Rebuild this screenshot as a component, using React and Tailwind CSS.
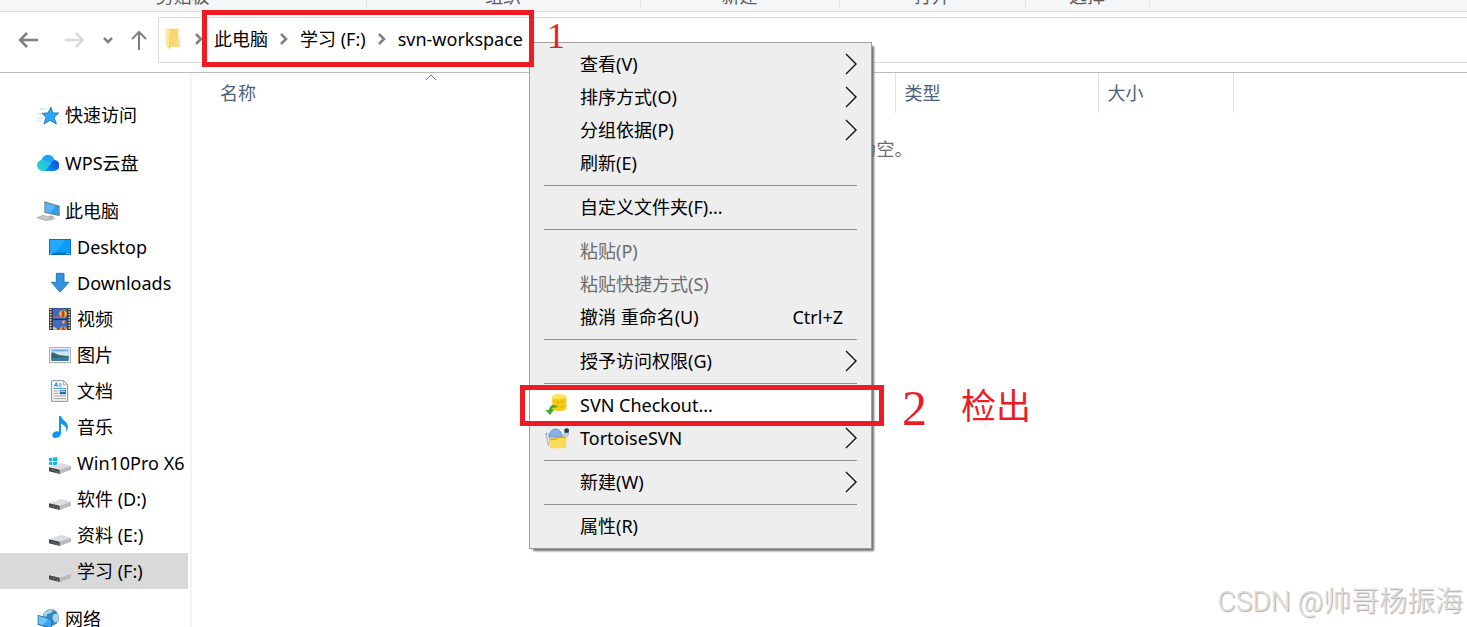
import React, { useState } from "react";

const StarIcon = () => (
  <svg viewBox="0 0 66 66" className="size-[22px] shrink-0" aria-hidden="true">
    <path d="M8 15h20M2 29h14M5 42h14M0 51h12" stroke="#8cc8f0" strokeWidth="2" />
    <path
      d="M42 10l5 17 18 0-14 13 7 20-19-11-18 11 6-20-12-12 18-1z"
      fill="#2ea8f5"
      stroke="#1c7fc4"
      strokeWidth="3"
      strokeLinejoin="round"
    />
  </svg>
);

const CloudIcon = () => (
  <svg viewBox="0 0 66 66" className="size-[22px] shrink-0" aria-hidden="true">
    <defs>
      <linearGradient id="cloudLeft" x1="0" y1="1" x2="1" y2="0">
        <stop offset="0" stopColor="#22dcc0" />
        <stop offset="1" stopColor="#25b4f5" />
      </linearGradient>
      <linearGradient id="cloudRight" x1="0" y1="1" x2="1" y2="0">
        <stop offset="0" stopColor="#0a8df5" />
        <stop offset="1" stopColor="#0a4fd6" />
      </linearGradient>
    </defs>
    <circle cx="33" cy="27" r="19" fill="#1ea2fa" />
    <path d="M17 23a17 17 0 1 0 0 34h18l10-24-12-6-6-1z" fill="url(#cloudLeft)" />
    <path d="M25 57l16-22a15 15 0 0 1 11-11 16 16 0 0 1-2 33z" fill="url(#cloudRight)" />
  </svg>
);

const ComputerIcon = () => (
  <svg viewBox="0 0 66 66" className="size-[22px] shrink-0 overflow-visible" aria-hidden="true">
    <path d="M38 46l14 4-2 8-18-5z" fill="#a8adb3" />
    <path d="M30 56l18-5 10 4-18 8z" fill="#c6cacf" />
    <path d="M22 4l46 13v32L22 38z" fill="#6f7f8e" />
    <path d="M25 8l40 12v25L25 35z" fill="#2f9eea" />
    <path d="M25 8l30 9-14 22-16-4z" fill="#55b5f7" />
    <path d="M0 53l18-7 28 8-19 8z" fill="#d6d9dc" stroke="#9ba0a6" strokeWidth="2" />
    <path d="M8 53l26 7M15 50l25 6" stroke="#9ba0a6" strokeWidth="2" strokeDasharray="4 2" />
  </svg>
);

const DesktopIcon = () => (
  <svg viewBox="0 0 66 66" className="size-[22px] shrink-0" aria-hidden="true">
    <path d="M0 9h66v48H0z" fill="#0b71b8" />
    <path d="M3 12h60v38H3z" fill="#0c9bfa" />
    <path d="M3 12h46L19 50H3z" fill="#27a8ff" />
    <path d="M4 53h4M52 53h3M58 53h4" stroke="#fff" strokeWidth="3" />
  </svg>
);

const DownloadIcon = () => (
  <svg viewBox="0 0 66 66" className="size-[22px] shrink-0" aria-hidden="true">
    <path d="M22 4h23v27h15L33 60 7 31h15z" fill="#3492e0" stroke="#2878bd" strokeWidth="3" />
  </svg>
);

const VideoIcon = () => (
  <svg viewBox="0 0 66 66" className="size-[22px] shrink-0" aria-hidden="true">
    <path d="M0 0h66v66H0z" fill="#3b3b3b" />
    <path d="M12 1h42v64H12z" fill="#3d6cc8" />
    <path d="M5 2v64M61 2v64" stroke="#e8e8e8" strokeWidth="5" strokeDasharray="4 4" />
    <path d="M12 24l10 2 8-4 4 8H12z" fill="#d54d7d" />
    <path d="M30 17c0-14 24-14 24 0 0 6-7 9-9 13h-6c-2-4-9-7-9-13z" fill="#f2b91d" />
    <path d="M42 6c-5 4-6 14-2 23h4c4-9 3-19-2-23z" fill="#c93a2e" />
    <path d="M12 34h42" stroke="#222" strokeWidth="3" />
    <path d="M35 38h17c0 5-4 7-6 10h-5c-2-3-6-5-6-10z" fill="#cf4a24" />
    <path d="M39 38h9l-3 9h-3z" fill="#f2b91d" />
    <path d="M31 66c1-14 23-14 24 0z" fill="#e8a31d" />
    <path d="M38 66c1-12 9-12 10 0z" fill="#c93a2e" />
    <path d="M12 56l8 3 6 6H12z" fill="#f2cf4b" />
  </svg>
);

const PictureIcon = () => (
  <svg viewBox="0 0 66 66" className="size-[22px] shrink-0" aria-hidden="true">
    <path d="M2 11h62v45H2z" fill="#fff" stroke="#a0a0a0" strokeWidth="3" />
    <path d="M7 16h52v35H7z" fill="#6daaf0" />
    <path d="M7 22h52v13H7z" fill="#cde5f9" />
    <path d="M7 26c10-2 14 6 26 8l26 3v6H7z" fill="#2f6b5c" />
    <path d="M7 42l52-3v12H7z" fill="#3b7ba5" />
  </svg>
);

const DocumentIcon = () => (
  <svg viewBox="0 0 66 66" className="size-[22px] shrink-0" aria-hidden="true">
    <path d="M8 2h36l12 12v50H8z" fill="#fff" stroke="#8a8a8a" strokeWidth="3" />
    <path d="M43 2v13h13" fill="#eee" stroke="#8a8a8a" strokeWidth="2" />
    <path d="M15 20l7-12 3 12M18 16h7M29 12h9M29 18h9" fill="none" stroke="#1d86d1" strokeWidth="3" />
    <path d="M13 25h38" stroke="#2b95df" strokeWidth="3" />
    <path d="M13 33h15M13 40h15M13 48h38M13 56h38" stroke="#9a9a9a" strokeWidth="3" />
    <path d="M32 30h19v13H32z" fill="#2c6ca8" />
    <path d="M34 32h15v4H34z" fill="#a4d4f5" />
  </svg>
);

const MusicIcon = () => (
  <svg viewBox="0 0 66 66" className="size-[22px] shrink-0" aria-hidden="true">
    <path
      d="M30 0h6c2 12 21 17 21 33 0 7-3 11-6 14 4-14-5-20-15-24v29c0 8-8 14-16 14-7 0-11-4-10-10 1-8 12-12 20-9z"
      fill="#0d98f0"
    />
  </svg>
);

const DriveIcon = ({ windows }) => (
  <svg viewBox="0 0 66 66" className="size-[22px] shrink-0" aria-hidden="true">
    {windows && (
      <path d="M0 18l10-1v10H0zM12 17l13-2v12H12zM0 29h10v10l-10-1zM12 29h13v12l-13-2z" fill="#11b5f2" />
    )}
    <path d="M0 46l36-13 30 8-34 12z" fill="#dcdde0" />
    <path d="M32 53l34-12v12L32 66z" fill="#b9babe" />
    <path d="M0 46l32 7v13L0 58z" fill="#3f4245" />
    <path d="M4 53l17 4" stroke="#6d7073" strokeWidth="3" />
    <path d="M23 58h4v4h-4z" fill="#35c23c" />
  </svg>
);

const NetworkIcon = () => (
  <svg viewBox="0 0 66 66" className="size-[22px] shrink-0" aria-hidden="true">
    <circle cx="41" cy="29" r="25" fill="#3b86b8" />
    <path d="M22 14c8-10 20-10 27-8l-7 9-11 3-4 9-8-2zM48 20l13-4c5 9 5 16 2 24l-9 4-8-12z" fill="#a9d3e8" />
    <path d="M14 57l22 8 10-5-20-8z" fill="#aeb3b8" />
    <path d="M2 20l43 14v29L2 50z" fill="#2576b2" />
    <path d="M5 24l37 12v22L5 47z" fill="#3aa8f2" />
    <path d="M5 24l29 9-16 18-13-4z" fill="#6bc4fb" />
  </svg>
);

const FolderIcon = () => (
  <svg viewBox="0 0 45 66" className="h-[22px] w-[15px] shrink-0" aria-hidden="true">
    <path d="M4 2h36v32h4v22H4z" fill="#f7d673" />
    <path d="M31 34h13v22H31z" fill="#fbdb7c" />
    <path d="M2 3l13 6v54L2 55z" fill="#ffe9a2" />
    <path d="M11 56v8l4-4V9" fill="#f5cf66" />
  </svg>
);

const CheckoutIcon = () => (
  <svg viewBox="0 0 66 66" className="size-[22px]" aria-hidden="true">
    <path d="M22 7v38c4 8 38 8 42 0V7z" fill="#fbd012" />
    <ellipse cx="43" cy="8" rx="21" ry="8" fill="#ffe457" />
    <path d="M22 19c6 7 36 7 42 0M22 33c6 7 36 7 42 0M37 14v36M51 14v35" fill="none" stroke="#dba90c" strokeWidth="2" />
    <path d="M34 35c-10-5-21 0-22 13H1l14 15 13-17h-7c1-5 6-8 13-4z" fill="#3dae26" />
  </svg>
);

const TortoiseIcon = () => (
  <svg viewBox="0 0 72 66" className="h-[22px] w-[24px]" aria-hidden="true">
    <path d="M12 40c-3-10 0-18 8-24M0 22l11 5M2 31l9 1" fill="none" stroke="#888" strokeWidth="2" />
    <path d="M3 18c7 1 8 7 11 12l-3 26c-7-8-1-20-8-38z" fill="#eef4fa" stroke="#8698aa" strokeWidth="2" />
    <path d="M12 30c1-32 38-32 40 0z" fill="#86b4ea" stroke="#527fb9" strokeWidth="2" />
    <path d="M50 29c9-2 9-12 9-22h12c2 18-6 23-14 29z" fill="#c3d9ec" stroke="#7a8da2" strokeWidth="2" />
    <circle cx="65" cy="11" r="7" fill="#253b50" />
    <path d="M16 34h16l4-5h27v34H16z" fill="#e2ab18" />
    <path d="M13 39h20l5-5h27l-3 30H16z" fill="#fcdc55" />
  </svg>
);

const Crumb = () => (
  <svg viewBox="0 0 8 12" className="h-3 w-2 shrink-0" aria-hidden="true">
    <path d="M1 1l5 5-5 5" fill="none" stroke="#808080" strokeWidth="2.5" />
  </svg>
);

const groups = [
  { label: "剪贴板", width: "w-[367px]" },
  { label: "组织", width: "w-[274px]" },
  { label: "新建", width: "w-[199px]" },
  { label: "打开", width: "w-[186px]" },
  { label: "选择", width: "w-[124px]" },
];

const roots = [
  { label: "快速访问", icon: <StarIcon /> },
  { label: "WPS云盘", icon: <CloudIcon /> },
  {
    label: "此电脑",
    icon: <ComputerIcon />,
    children: [
      { label: "Desktop", icon: <DesktopIcon /> },
      { label: "Downloads", icon: <DownloadIcon /> },
      { label: "视频", icon: <VideoIcon /> },
      { label: "图片", icon: <PictureIcon /> },
      { label: "文档", icon: <DocumentIcon /> },
      { label: "音乐", icon: <MusicIcon /> },
      { label: "Win10Pro X6", icon: <DriveIcon windows /> },
      { label: "软件 (D:)", icon: <DriveIcon /> },
      { label: "资料 (E:)", icon: <DriveIcon /> },
      { label: "学习 (F:)", icon: <DriveIcon /> },
    ],
  },
  { label: "网络", icon: <NetworkIcon /> },
];

const menu = [
  [
    { label: "查看(V)", sub: true },
    { label: "排序方式(O)", sub: true },
    { label: "分组依据(P)", sub: true },
    { label: "刷新(E)" },
  ],
  [{ label: "自定义文件夹(F)..." }],
  [
    { label: "粘贴(P)", disabled: true },
    { label: "粘贴快捷方式(S)", disabled: true },
    { label: "撤消 重命名(U)", shortcut: "Ctrl+Z" },
  ],
  [{ label: "授予访问权限(G)", sub: true }],
  [
    { label: "SVN Checkout...", icon: <CheckoutIcon />, active: true },
    { label: "TortoiseSVN", icon: <TortoiseIcon />, sub: true },
  ],
  [{ label: "新建(W)", sub: true }],
  [{ label: "属性(R)" }],
];

const Ribbon = () => (
  <div className="flex h-3 items-end overflow-hidden border-b border-[#dadbdc] bg-[#f5f6f7]">
    {groups.map((group) => (
      <div key={group.label} className={`flex h-3 justify-center ${group.width}`}>
        <span className="-mt-[15px] flex-1 pr-px text-center leading-6 text-[#5a5a5a]">{group.label}</span>
        <span className="h-2 w-px bg-[#e2e3e4]" />
      </div>
    ))}
  </div>
);

const AddressBar = () => (
  <div className="flex h-[61px] items-center border-b border-[#bcbcbc] pb-1">
    <button aria-label="后退" className="ml-[18px]">
      <svg viewBox="0 0 22 20" className="h-5 w-[22px]">
        <path d="M20 10H3M9 3l-7 7 7 7" fill="none" stroke="#808080" strokeWidth="2.5" />
      </svg>
    </button>
    <button aria-label="前进" disabled className="ml-6">
      <svg viewBox="0 0 22 20" className="h-5 w-[22px]">
        <path d="M1 10h17M12 3l7 7-7 7" fill="none" stroke="#dcdcdc" strokeWidth="2.5" />
      </svg>
    </button>
    <button aria-label="最近浏览的位置" className="ml-4">
      <svg viewBox="0 0 12 12" className="size-3">
        <path d="M2 4l4 4 4-4" fill="none" stroke="#808080" strokeWidth="2.5" />
      </svg>
    </button>
    <button aria-label="向上" className="ml-4">
      <svg viewBox="0 0 18 22" className="h-[22px] w-[18px]">
        <path d="M9 21V3M2 10l7-7 7 7" fill="none" stroke="#808080" strokeWidth="2" />
      </svg>
    </button>
    <nav className="ml-[10px] flex h-[46px] flex-1 items-center border-y border-l border-[#d9d9d9] pb-[2px] pl-[6px]">
      <FolderIcon />
      <span className="ml-[15px] flex">
        <Crumb />
      </span>
      <button className="ml-[11px]">此电脑</button>
      <span className="mx-3 flex">
        <Crumb />
      </span>
      <button>学习 (F:)</button>
      <span className="mx-3 flex">
        <Crumb />
      </span>
      <button>svn-workspace</button>
    </nav>
  </div>
);

const TreeItem = ({ item, nested, selected, onSelect }) => (
  <button
    onClick={() => onSelect(item.label)}
    className={`flex h-9 w-full items-center gap-[6px] overflow-hidden whitespace-nowrap ${
      nested ? "pl-[49px]" : "pl-[37px]"
    } ${selected === item.label ? "bg-[#d9d9d9]" : ""}`}
  >
    {item.icon}
    <span>{item.label}</span>
  </button>
);

const Sidebar = () => {
  const [selected, setSelected] = useState("学习 (F:)");

  return (
    <aside className="w-48 shrink-0 border-r-2 border-[#f4f4f4] pt-6 pr-[2px]">
      <ul className="flex flex-col gap-3">
        {roots.map((root) => (
          <li key={root.label}>
            <TreeItem item={root} selected={selected} onSelect={setSelected} />
            {root.children && (
              <ul>
                {root.children.map((child) => (
                  <li key={child.label}>
                    <TreeItem item={child} nested selected={selected} onSelect={setSelected} />
                  </li>
                ))}
              </ul>
            )}
          </li>
        ))}
      </ul>
    </aside>
  );
};

const FileList = () => (
  <main className="min-w-0 flex-1">
    <table className="ml-3 table-fixed border-collapse text-left text-[#4c607a]">
      <thead>
        <tr className="h-10">
          <th className="relative w-[453px] pl-4 font-normal">
            名称
            <svg viewBox="0 0 12 7" className="absolute top-px left-[221px] h-[7px] w-3" aria-hidden="true">
              <path d="M1 6l5-5 5 5" fill="none" stroke="#777" />
            </svg>
          </th>
          <th aria-label="修改日期" className="w-[238px] border-x border-[#e3e3e3]" />
          <th className="w-[203px] border-r border-[#e3e3e3] pl-[9px] font-normal">类型</th>
          <th className="w-[135px] border-r border-[#e3e3e3] pl-[9px] font-normal">大小</th>
        </tr>
      </thead>
    </table>
    <p className="mt-6 pl-10 text-center leading-6 text-[#6d6d6d]">此文件夹为空。</p>
  </main>
);

const ContextMenu = () => (
  <div
    role="menu"
    className="absolute top-[42px] left-[529px] w-[343px] border border-[#a0a0a0] bg-[#eeeeee] pt-1 pb-[6px] shadow-[3px_3px_2px_-1px_#707070]"
  >
    {menu.map((section, index) => (
      <div key={index}>
        {index > 0 && <hr className="mx-[14px] mt-[6px] mb-1 border-[#919191]" />}
        {section.map((item) => (
          <button
            key={item.label}
            role="menuitem"
            disabled={item.disabled}
            className={`flex h-[33px] w-full items-center pr-[14px] text-left disabled:text-[#6d6d6d] ${
              item.active ? "bg-white" : ""
            }`}
          >
            <span className="flex w-[50px] shrink-0 pl-[15px]">{item.icon}</span>
            <span className="flex-1">{item.label}</span>
            {item.shortcut && <span className="pr-[14px]">{item.shortcut}</span>}
            {item.sub && (
              <svg viewBox="0 0 13 22" className="h-[22px] w-[13px]" aria-hidden="true">
                <path d="M2 1l10 10L2 21" fill="none" stroke="#111" strokeWidth="1.4" />
              </svg>
            )}
          </button>
        ))}
      </div>
    ))}
  </div>
);

const App = () => {
  return (
    <div className="relative flex h-screen flex-col overflow-hidden bg-white font-['Noto_Sans','Noto_Sans_CJK_SC',sans-serif] text-[18px] leading-6 text-black">
      <Ribbon />
      <AddressBar />
      <div className="flex min-h-0 flex-1">
        <Sidebar />
        <FileList />
      </div>

      <ContextMenu />

      {/* step marks */}
      <div className="pointer-events-none absolute top-[10px] left-[202px] h-[57px] w-[332px] border-5 border-[#ed1c24]" />
      <span className="absolute top-[18px] left-[547px] font-['Liberation_Serif',serif] text-[36px] leading-9 text-[#ed1c24]">
        1
      </span>
      <div className="pointer-events-none absolute top-[385px] left-[520px] h-[41px] w-[364px] border-5 border-[#ed1c24]" />
      <p className="absolute top-[386px] left-[902px] flex gap-[34px] font-['Liberation_Serif','Noto_Sans_CJK_SC',serif] leading-[44px] text-[#ed1c24]">
        <span className="text-[50px]">2</span>
        <span className="text-[35px]">检出</span>
      </p>

      <p className="absolute right-1 bottom-[5px] font-['Roboto','Noto_Sans_CJK_SC',sans-serif] text-[28px] leading-10 font-light text-[#dedede] [text-shadow:1px_1px_1px_#a8a8a8]">
        CSDN @帅哥杨振海
      </p>
    </div>
  );
};

export default App;
